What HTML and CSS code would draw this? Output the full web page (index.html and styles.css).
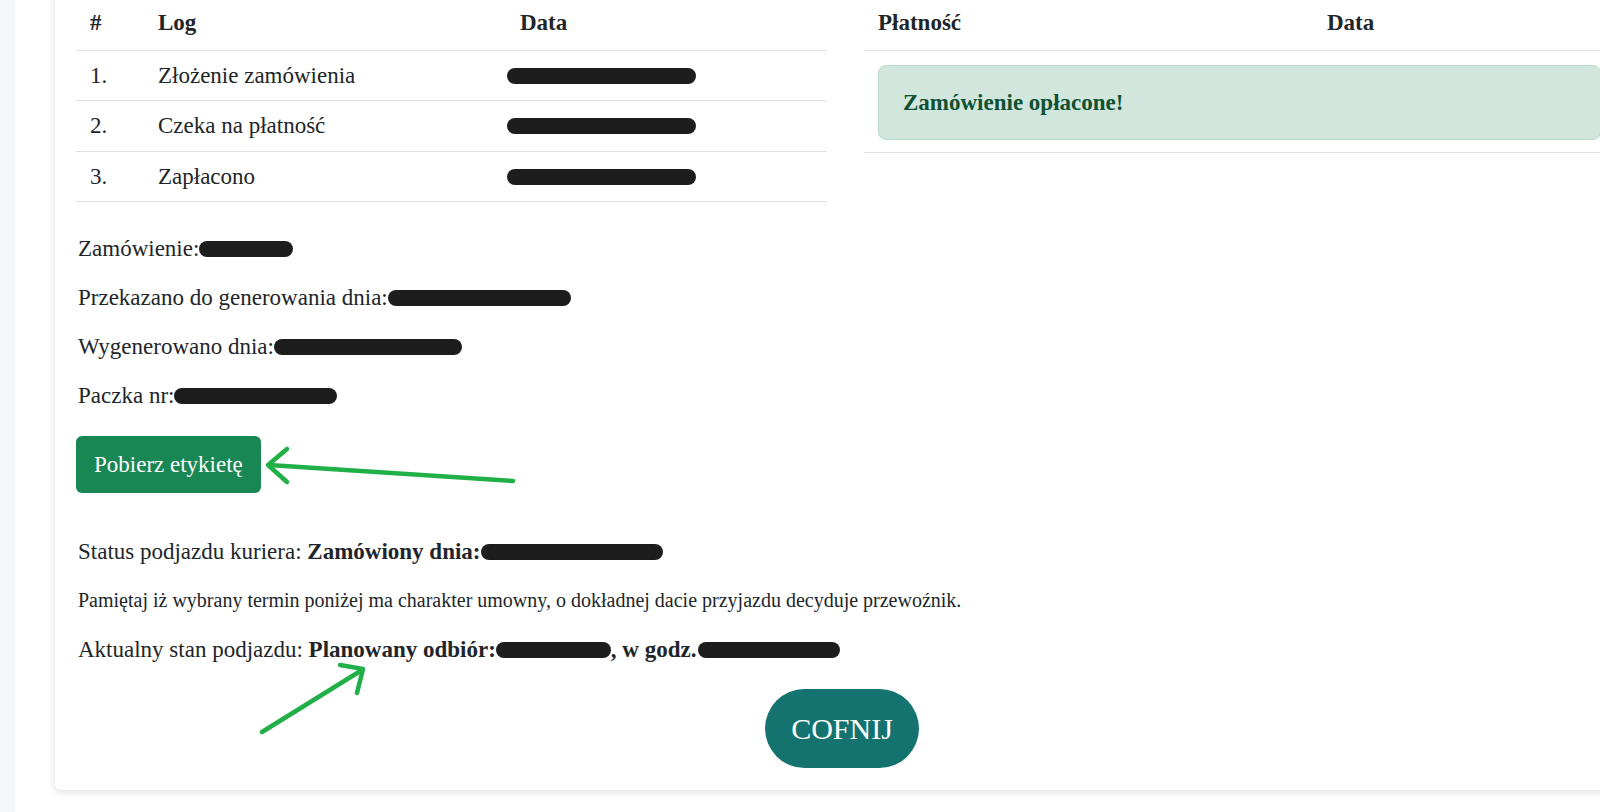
FILE: index.html
```html
<!DOCTYPE html>
<html lang="pl">
<head>
    <meta charset="UTF-8">
    <meta name="viewport" content="width=device-width, initial-scale=1.0">
    <title>Szczegóły zamówienia</title>
    <link rel="stylesheet" href="styles.css">
</head>
<body>
<div class="layout">
    <aside class="sidebar"></aside>
    <main class="content">
        <div class="card">
            <div class="tables">
                <table class="log-table">
                    <colgroup>
                        <col class="col-num">
                        <col class="col-log">
                        <col class="col-date">
                    </colgroup>
                    <thead>
                    <tr><th>#</th><th>Log</th><th>Data</th></tr>
                    </thead>
                    <tbody>
                    <tr><td>1.</td><td>Złożenie zamówienia</td><td class="date-cell"><span class="redacted r-date"></span></td></tr>
                    <tr><td>2.</td><td>Czeka na płatność</td><td class="date-cell"><span class="redacted r-date"></span></td></tr>
                    <tr><td>3.</td><td>Zapłacono</td><td class="date-cell"><span class="redacted r-date"></span></td></tr>
                    </tbody>
                </table>

                <table class="pay-table">
                    <colgroup>
                        <col class="col-pay">
                        <col class="col-pay-date">
                    </colgroup>
                    <thead>
                    <tr><th>Płatność</th><th>Data</th></tr>
                    </thead>
                    <tbody>
                    <tr>
                        <td colspan="2" class="alert-cell">
                            <div class="alert-success">Zamówienie opłacone!</div>
                        </td>
                    </tr>
                    </tbody>
                </table>
            </div>

            <div class="details">
                <p>Zamówienie:<span class="redacted r-order"></span></p>
                <p>Przekazano do generowania dnia:<span class="redacted r-sent"></span></p>
                <p>Wygenerowano dnia:<span class="redacted r-generated"></span></p>
                <p>Paczka nr:<span class="redacted r-parcel"></span></p>
            </div>

            <button type="button" class="btn-label">Pobierz etykietę</button>

            <div class="pickup">
                <p>Status podjazdu kuriera: <strong>Zamówiony dnia:</strong><span class="redacted r-ordered"></span></p>
                <p class="note">Pamiętaj iż wybrany termin poniżej ma charakter umowny, o dokładnej dacie przyjazdu decyduje przewoźnik.</p>
                <p>Aktualny stan podjazdu: <strong>Planowany odbiór:<span class="redacted r-pickup"></span>, w godz.<span class="redacted r-hour"></span></strong></p>
            </div>

            <div class="back">
                <a href="#" class="btn-back">COFNIJ</a>
            </div>
        </div>
    </main>
</div>

<!-- green hand-drawn arrows over the page -->
<svg class="annotations" width="1600" height="812" viewBox="0 0 1600 812">
    <g fill="none" stroke="#20b047" stroke-width="4.5" stroke-linecap="round" stroke-linejoin="round">
        <path d="M513 481 L269 465"/>
        <path d="M287 449 L268 465 L287 482"/>
        <path d="M262 732 L362 670"/>
        <path d="M340 665 L363 669 L357 693"/>
    </g>
</svg>
</body>
</html>
```

FILE: styles.css
```css
/* Page */
body {
    margin: 0;
    background-color: #fff;
    color: #212529;
    font-family: "Liberation Serif", "Times New Roman", serif;
    font-size: 23px;
    overflow: hidden;
}

.layout {
    display: flex;
    min-height: 812px;
}

.sidebar {
    width: 15px;
    flex-shrink: 0;
    background-color: #f5f6f8;
}

.content {
    padding-left: 40px;
}

/* Card holding the order */
.card {
    width: 1538px;
    margin-top: -20px;
    padding: 20px 21px 22px;
    background-color: #fff;
    border-radius: 6px;
    box-shadow: 0 2px 8px rgba(0, 0, 0, 0.13);
}

/* Two tables side by side */
.tables {
    display: grid;
    grid-template-columns: 751px 751px;
    gap: 37px;
    align-items: start;
}

table {
    width: 100%;
    border-collapse: collapse;
    table-layout: fixed;
}

th, td {
    text-align: left;
    padding: 8px 14px;
    line-height: 33.33px;
    border-bottom: 1px solid #dee2e6;
}

th {
    font-weight: bold;
    padding: 6px 14px 11px;
    line-height: 33px;
}

.col-num { width: 68px; }
.col-log { width: 362px; }
.col-pay { width: 449px; }

.date-cell {
    padding-left: 1px;
}

.alert-cell {
    padding: 14px 14px 12px;
}

.alert-success {
    background-color: #d1e7dd;
    border: 1px solid #badbcc;
    border-radius: 8px;
    color: #0f5132;
    font-weight: bold;
    padding: 20px 24px;
    line-height: 33px;
}

/* Redacted values */
.redacted {
    display: inline-block;
    height: 16px;
    border-radius: 8px;
    background-color: #1d1d1d;
    vertical-align: -1px;
}

.r-date { width: 189px; }
.r-order { width: 94px; }
.r-sent { width: 183px; }
.r-generated { width: 188px; }
.r-parcel { width: 163px; }
.r-ordered { width: 182px; }
.r-pickup { width: 115px; }
.r-hour { width: 142px; margin-left: 2px; }

/* Order details */
.details, .pickup {
    display: flex;
    flex-direction: column;
    gap: 16px;
    padding-left: 2px;
}

.details {
    margin-top: 30px;
}

.details p, .pickup p {
    margin: 0;
    line-height: 33px;
}

.pickup {
    margin-top: 42px;
}

.pickup .note {
    font-size: 20px;
}

/* Label download button */
.btn-label {
    display: block;
    margin-top: 24px;
    background-color: #198754;
    color: #fff;
    border: none;
    border-radius: 6px;
    font-family: inherit;
    font-size: 23px;
    line-height: 33px;
    padding: 12px 18px;
    cursor: pointer;
}

/* Back button */
.back {
    display: flex;
    justify-content: center;
    margin-top: 23px;
    padding-right: 6px;
}

.btn-back {
    display: inline-block;
    height: 79px;
    line-height: 79px;
    padding: 0 26px;
    border-radius: 40px;
    background-color: #14736f;
    color: #fff;
    font-size: 30px;
    text-decoration: none;
}

/* Arrows drawn over the page */
.annotations {
    position: absolute;
    top: 0;
    left: 0;
    pointer-events: none;
}
```
